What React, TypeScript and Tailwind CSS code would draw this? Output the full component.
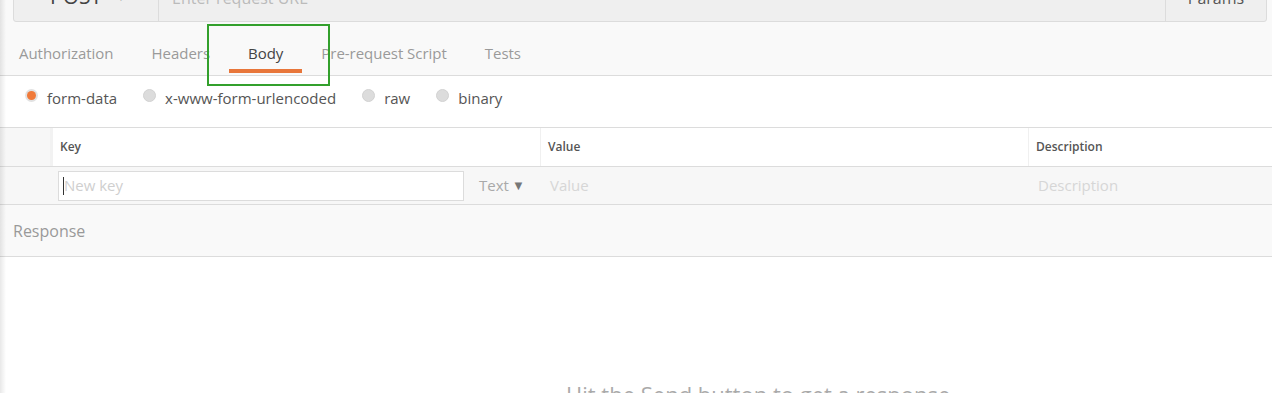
import React from "react";

const font = { fontFamily: '"Open Sans", "Noto Sans", sans-serif' };

function Radio({ checked }: { checked?: boolean }) {
  return checked ? (
    <span className="w-[13px] h-[13px] rounded-full bg-[#e2e2e2] flex items-center justify-center">
      <span className="block w-[9px] h-[9px] rounded-full bg-[#f07a3a]" />
    </span>
  ) : (
    <span className="block w-[13px] h-[13px] rounded-full bg-[#dcdcdc] border border-[#d2d2d2]" />
  );
}

export default function App() {
  const tabs = ["Authorization", "Headers", "Body", "Pre-request Script", "Tests"];
  const radios = ["form-data", "x-www-form-urlencoded", "raw", "binary"];
  return (
    <div className="relative w-[1272px] h-[393px] overflow-hidden bg-white" style={font}>
      {/* top area */}
      <div className="bg-[#f9f9f9] border-b border-[#dcdcdc]">
        <div className="ml-[13px] mr-[5px] mt-[-22px] h-[44px] flex bg-[#efefef] border border-[#dcdcdc] rounded-b-[3px]">
          <div className="w-[145px] border-r border-[#dcdcdc] flex items-center pl-[36px] gap-[14px] pb-[6px]">
            <span className="text-[21px] text-[#444]">POST</span>
            <span className="text-[10px] text-[#aaa]">▼</span>
          </div>
          <div className="flex-1 flex items-center pl-[13px] pb-[5px] text-[16px] text-[#bbb]">Enter request URL</div>
          <div className="w-[101px] border-l border-[#dcdcdc] flex items-center justify-center pb-[5px] text-[16px] text-[#555]">Params</div>
        </div>
        <div className="flex h-[53px] text-[15px] tracking-[-0.03px]">
          {tabs.map((t) => (
            <div key={t} className="relative px-[19px] flex items-center pt-[10px]">
              <span className={t === "Body" ? "text-[#444]" : "text-[#9a9a9a]"}>{t}</span>
              {t === "Body" && <span className="absolute left-0 right-0 bottom-[2px] h-[4px] bg-[#e8763a]" />}
            </div>
          ))}
        </div>
      </div>

      {/* radio row */}
      <div className="h-[52px] flex items-center pl-[25px] gap-[26px] text-[15px] text-[#555] border-b border-[#dcdcdc] pb-[7px]">
        {radios.map((r, i) => (
          <div key={r} className="flex items-center gap-[9px]">
            <span className="block mt-[-5px]"><Radio checked={i === 0} /></span>
            <span>{r}</span>
          </div>
        ))}
      </div>

      {/* table */}
      <div className="flex h-[39px] border-b border-[#dcdcdc] text-[12px] font-semibold text-[#555]">
        <div className="w-[53px] bg-[#f7f7f7] border-r-[3px] border-[#f2f2f2]" />
        <div className="w-[488px] flex items-center pl-[7px] border-r border-[#f0f0f0]">Key</div>
        <div className="w-[488px] flex items-center pl-[7px] border-r border-[#f0f0f0]">Value</div>
        <div className="flex-1 flex items-center pl-[7px]">Description</div>
      </div>
      <div className="flex h-[38px] items-center bg-[#f7f7f7] border-b border-[#dcdcdc] text-[15px]">
        <div className="w-[58px]" />
        <div className="w-[406px] h-[30px] bg-white border border-[#dcdcdc] flex items-center pl-[4px] text-[#cfcfcf]">
          <span className="block w-px h-[18px] bg-[#333]" />
          <span>New key</span>
        </div>
        <div className="w-[86px] flex items-center pl-[15px] gap-[3px] text-[#a9a9a9]">
          <span>Text</span>
          <span className="text-[13px] text-[#777]">▼</span>
        </div>
        <div className="w-[488px] text-[#d6d6d6]">Value</div>
        <div className="flex-1 text-[#d6d6d6]">Description</div>
      </div>

      {/* response */}
      <div className="h-[52px] bg-[#f9f9f9] border-b border-[#dcdcdc] flex items-center pl-[13px] text-[16px] text-[#999]">Response</div>

      <div className="pt-[122px] pl-[566px] text-[22px] leading-[30px] text-[#aaa] whitespace-nowrap">Hit the Send button to get a response.</div>

      {/* left shadow */}
      <div className="absolute left-0 top-0 bottom-0 w-[6px] bg-gradient-to-r from-[rgba(0,0,0,0.09)] to-transparent pointer-events-none" />
      {/* annotation box */}
      <div className="absolute left-[207px] top-[24px] w-[123px] h-[62px] border-2 border-[#33a02c] pointer-events-none" />
    </div>
  );
}
